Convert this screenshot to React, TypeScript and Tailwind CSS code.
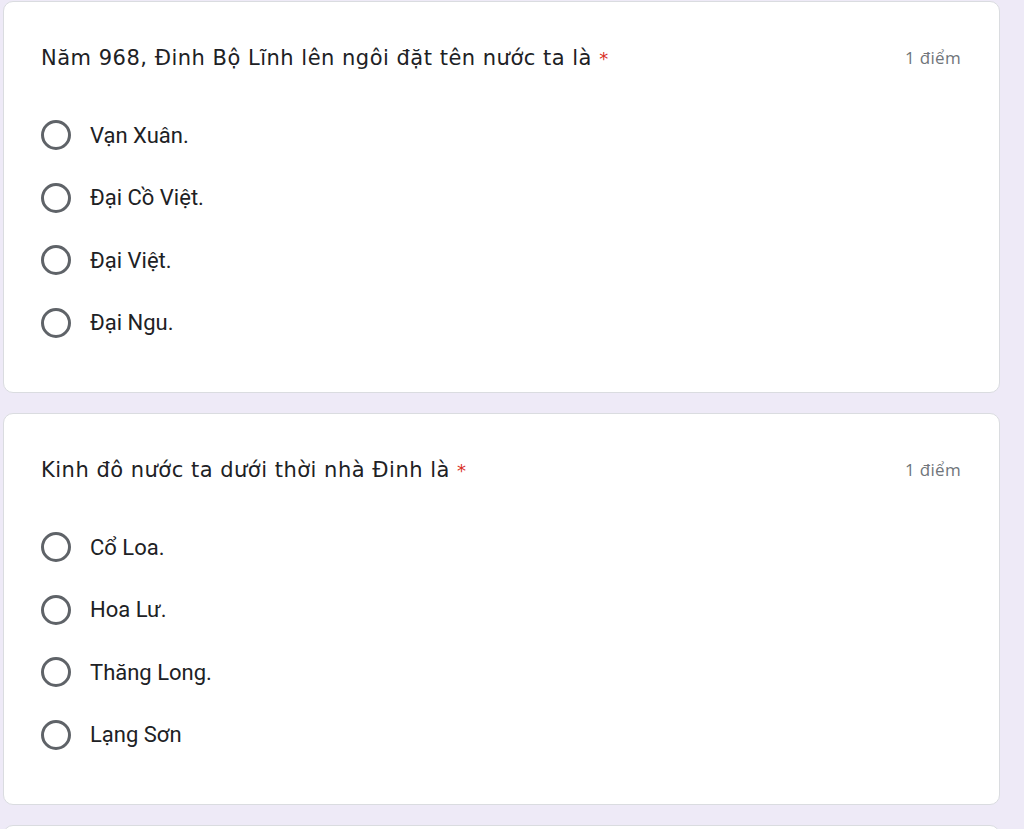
import React from 'react';

type Question = {
  title: string;
  options: string[];
};

const questions: Question[] = [
  {
    title: 'Năm 968, Đinh Bộ Lĩnh lên ngôi đặt tên nước ta là',
    options: ['Vạn Xuân.', 'Đại Cồ Việt.', 'Đại Việt.', 'Đại Ngu.'],
  },
  {
    title: 'Kinh đô nước ta dưới thời nhà Đinh là',
    options: ['Cổ Loa.', 'Hoa Lư.', 'Thăng Long.', 'Lạng Sơn'],
  },
];

const Radio = () => (
  <span className="block w-[30px] h-[30px] rounded-full border-[3px] border-[#5f6368] shrink-0" />
);

const QuestionCard = ({ q }: { q: Question }) => (
  <div className="bg-white rounded-[10px] border border-[#dadce0] pl-[37px] pr-[38px] pt-[42px] pb-[54px]">
    <div className="flex items-start justify-between">
      <h2 className="font-['DejaVu_Sans',sans-serif] text-[21px] leading-[28px] text-[#202124] tracking-[0.5px]">
        {q.title} <span className="text-[#d93025] text-[18px]">*</span>
      </h2>
      <span className="font-['Open_Sans',sans-serif] text-[17px] leading-[28px] text-[#70757a] tracking-[0.3px]">1 điểm</span>
    </div>
    <div className="mt-[47px] flex flex-col gap-[32px]">
      {q.options.map((o) => (
        <label key={o} className="flex items-center gap-[19px] h-[30.5px]">
          <Radio />
          <span className="font-['Roboto',sans-serif] text-[22px] text-[#202124]">{o}</span>
        </label>
      ))}
    </div>
  </div>
);

export default function App() {
  return (
    <div className="bg-[#eeeaf7] pl-[3px] pr-[24px] pt-[1px] flex flex-col gap-[20px] overflow-hidden h-[829px]">
      {questions.map((q) => (
        <QuestionCard key={q.title} q={q} />
      ))}
      <div className="bg-white rounded-[10px] border border-[#dadce0] h-[100px] shrink-0" />
    </div>
  );
}
